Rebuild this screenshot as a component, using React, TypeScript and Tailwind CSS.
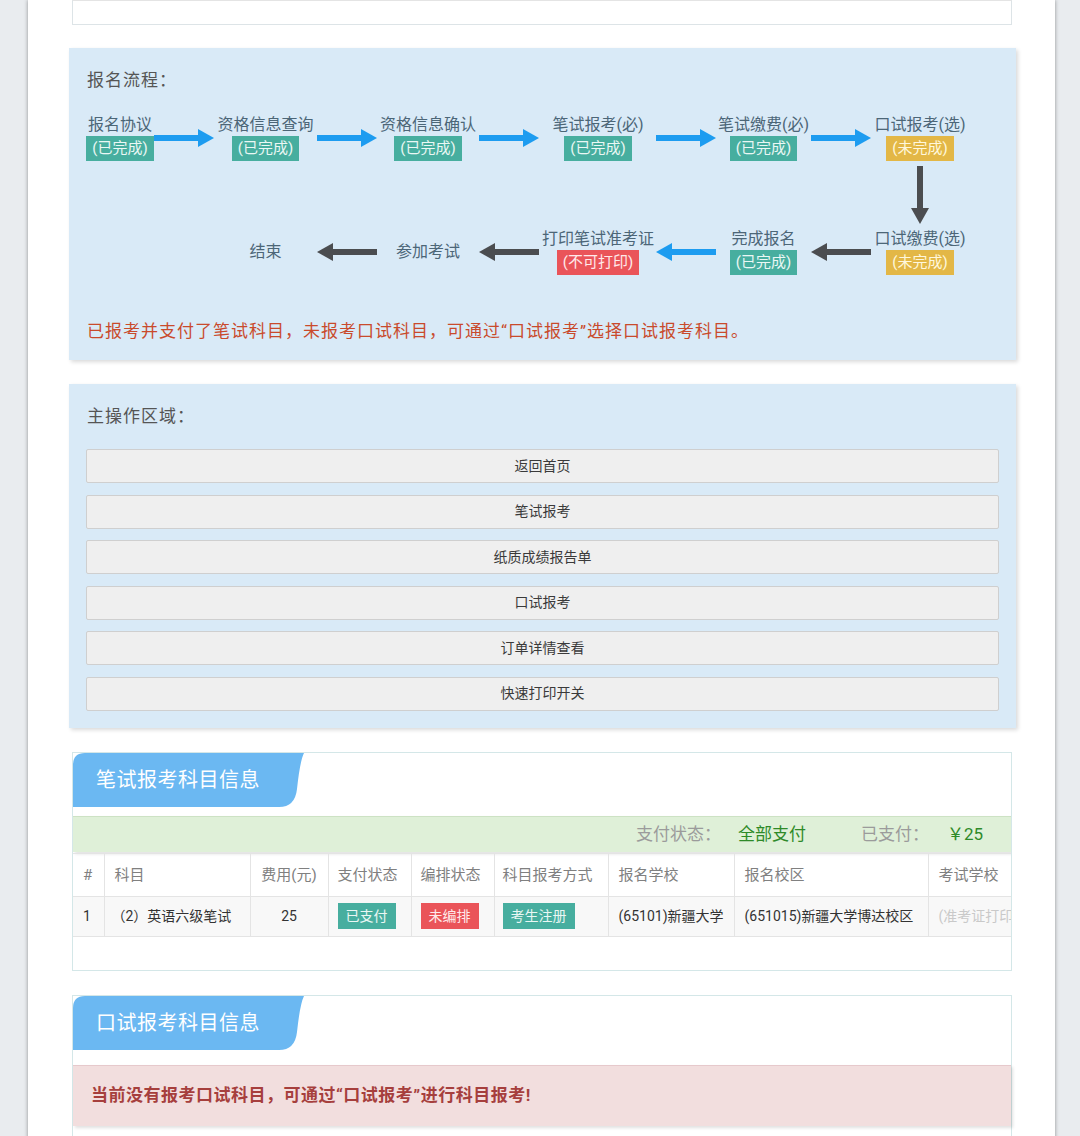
import React from "react";

type Step = { label: string; badge?: string; tone?: "done" | "todo" | "no" };

const BADGE_CLS: Record<string, string> = {
  done: "bg-[#47ae9f] text-[#eaf7f4]",
  todo: "bg-[#e3b746] text-[#fff7dc]",
  no: "bg-[#ea5459] text-[#ffe9ea]",
};

const BLUE = "#1d9cf0";
const DARK = "#4b4d50";

function ArrowRight({ color }: { color: string }) {
  return (
    <svg width="60" height="18" viewBox="0 0 60 18">
      <rect x="0" y="6" width="46" height="6" fill={color} />
      <polygon points="44,0 60,9 44,18" fill={color} />
    </svg>
  );
}

function ArrowLeft({ color }: { color: string }) {
  return (
    <svg width="60" height="18" viewBox="0 0 60 18">
      <rect x="14" y="6" width="46" height="6" fill={color} />
      <polygon points="16,0 0,9 16,18" fill={color} />
    </svg>
  );
}

function ArrowDown({ color }: { color: string }) {
  return (
    <svg width="18" height="58" viewBox="0 0 18 58">
      <rect x="6" y="0" width="6" height="44" fill={color} />
      <polygon points="0,42 18,42 9,58" fill={color} />
    </svg>
  );
}

function StepItem({ s }: { s: Step }) {
  return (
    <div className="flex flex-col items-center">
      <span className="text-[16px] leading-[22px] text-[#4c6677] whitespace-nowrap">{s.label}</span>
      {s.badge && (
        <span className={`h-[25px] leading-[25px] px-[6px] text-[15px] whitespace-nowrap ${BADGE_CLS[s.tone ?? "done"]}`}>
          {s.badge}
        </span>
      )}
    </div>
  );
}

const ROW1: Step[] = [
  { label: "报名协议", badge: "(已完成)", tone: "done" },
  { label: "资格信息查询", badge: "(已完成)", tone: "done" },
  { label: "资格信息确认", badge: "(已完成)", tone: "done" },
  { label: "笔试报考(必)", badge: "(已完成)", tone: "done" },
  { label: "笔试缴费(必)", badge: "(已完成)", tone: "done" },
  { label: "口试报考(选)", badge: "(未完成)", tone: "todo" },
];

const ACTIONS = ["返回首页", "笔试报考", "纸质成绩报告单", "口试报考", "订单详情查看", "快速打印开关"];

function Tab({ title }: { title: string }) {
  // blue tab with slanted right edge
  return (
    <div className="relative w-[232px] h-[54px] flex items-center">
      <svg className="absolute inset-0" width="232" height="54" viewBox="0 0 232 54">
        <path d="M0,12 Q0,0 12,0 L231,0 Q227,8 224,36 Q222,54 206,54 L0,54 Z" fill="#6bb8f2" />
      </svg>
      <span className="relative pl-[23px] text-[20px] text-white tracking-[0.5px]">{title}</span>
    </div>
  );
}

function Badge({ text, cls }: { text: string; cls: string }) {
  return (
    <span className={`inline-block h-[26px] leading-[26px] px-[8px] text-[14px] ${cls}`}>{text}</span>
  );
}

export default function App() {
  return (
    <div className="min-h-[1136px] bg-[#e9ecef] font-['Roboto','Noto_Sans_CJK_SC',sans-serif] overflow-hidden">
      <div className="ml-[28px] w-[1027px] min-h-[1180px] bg-white shadow-[0_0_4px_rgba(0,0,0,0.4)] pl-[41px] pr-[39px] pb-[40px]">
        {/* tail of previous card */}
        <div className="ml-[3px] w-[940px] h-[25px] border border-[#dde4e7] border-t-[#e4e4e4] bg-white" />

        {/* 报名流程 */}
        <div className="mt-[23px] bg-[#d9eaf7] shadow-[2px_2px_4px_rgba(0,0,0,0.15)] pt-[20px] pb-[17px] pl-[17px] pr-[17px]">
          <div className="pl-[1px] text-[17px] leading-[24px] text-[#555] tracking-[1px]">报名流程：</div>
          <div className="mt-[22px] grid grid-cols-[68px_60px_103px_60px_102px_60px_118px_58px_97px_58px_100px] items-center justify-items-center">
            {ROW1.map((s, i) => (
              <React.Fragment key={s.label}>
                <StepItem s={s} />
                {i < ROW1.length - 1 && <ArrowRight color={BLUE} />}
              </React.Fragment>
            ))}

            <div className="col-start-11 h-[67px] flex items-center">
              <ArrowDown color={DARK} />
            </div>

            <div />
            <div />
            <StepItem s={{ label: "结束" }} />
            <ArrowLeft color={DARK} />
            <StepItem s={{ label: "参加考试" }} />
            <ArrowLeft color={DARK} />
            <StepItem s={{ label: "打印笔试准考证", badge: "(不可打印)", tone: "no" }} />
            <ArrowLeft color={BLUE} />
            <StepItem s={{ label: "完成报名", badge: "(已完成)", tone: "done" }} />
            <ArrowLeft color={DARK} />
            <StepItem s={{ label: "口试缴费(选)", badge: "(未完成)", tone: "todo" }} />
          </div>
          <p className="mt-[44px] pl-[1px] text-[17px] leading-[24px] tracking-[1px] text-[#c94a2c]">
            已报考并支付了笔试科目，未报考口试科目，可通过“口试报考”选择口试报考科目。
          </p>
        </div>

        {/* 主操作区域 */}
        <div className="mt-[24px] bg-[#d9eaf7] shadow-[2px_2px_4px_rgba(0,0,0,0.15)] pt-[20px] pb-[17px] px-[17px]">
          <div className="pl-[1px] text-[17px] leading-[24px] text-[#555] tracking-[1px]">主操作区域：</div>
          <div className="mt-[21px] flex flex-col gap-[11.6px]">
            {ACTIONS.map(a => (
              <button
                key={a}
                className="h-[34px] w-full rounded-[2px] border border-[#cfcfcf] bg-[#efefef] text-[14px] text-[#3a3a3a]"
              >
                {a}
              </button>
            ))}
          </div>
        </div>

        {/* 笔试报考科目信息 */}
        <div className="mt-[24px] ml-[3px] w-[940px] h-[219px] border border-[#d4e7e8] bg-white overflow-hidden">
          <Tab title="笔试报考科目信息" />
          <div className="mt-[9px] flex items-center justify-end h-[36px] pr-[28px] bg-[#dff0d8] border-t border-[#cde2c4] shadow-[2px_2px_3px_rgba(0,0,0,0.12)] text-[17px]">
            <span className="text-[#9b9b9b]">支付状态：</span>
            <span className="ml-[17px] text-[#2e8a28]">全部支付</span>
            <span className="ml-[55px] text-[#9b9b9b]">已支付：</span>
            <span className="ml-[18px] text-[#2e8a28]">￥25</span>
          </div>
          <div className="mt-[1px] overflow-hidden">
            <table className="table-fixed w-[1010px] border-collapse text-left">
              <colgroup>
                <col className="w-[31px]" />
                <col className="w-[146px]" />
                <col className="w-[78px]" />
                <col className="w-[83px]" />
                <col className="w-[83px]" />
                <col className="w-[114px]" />
                <col className="w-[126px]" />
                <col className="w-[194px]" />
                <col className="w-[155px]" />
              </colgroup>
              <thead>
                <tr className="h-[43px] text-[15px] text-[#808080]">
                  <th className="font-normal border border-[#e4e4e4] border-l-0 pl-[10px]">#</th>
                  <th className="font-normal border border-[#e4e4e4] pl-[10px]">科目</th>
                  <th className="font-normal border border-[#e4e4e4] text-center">费用(元)</th>
                  <th className="font-normal border border-[#e4e4e4] pl-[9px]">支付状态</th>
                  <th className="font-normal border border-[#e4e4e4] pl-[9px]">编排状态</th>
                  <th className="font-normal border border-[#e4e4e4] pl-[8px]">科目报考方式</th>
                  <th className="font-normal border border-[#e4e4e4] pl-[10px]">报名学校</th>
                  <th className="font-normal border border-[#e4e4e4] pl-[10px]">报名校区</th>
                  <th className="font-normal border border-[#e4e4e4] pl-[10px] whitespace-nowrap">考试学校</th>
                </tr>
              </thead>
              <tbody>
                <tr className="h-[40px] bg-[#f8f8f8] text-[14px] text-[#333]">
                  <td className="border border-[#e4e4e4] border-l-0 pl-[10px]">1</td>
                  <td className="border border-[#e4e4e4] pl-[7px] whitespace-nowrap">（2）英语六级笔试</td>
                  <td className="border border-[#e4e4e4] text-center">25</td>
                  <td className="border border-[#e4e4e4] pl-[9px]">
                    <Badge text="已支付" cls="bg-[#47ae9f] text-[#eaf7f4]" />
                  </td>
                  <td className="border border-[#e4e4e4] pl-[9px]">
                    <Badge text="未编排" cls="bg-[#ea5459] text-[#ffe9ea]" />
                  </td>
                  <td className="border border-[#e4e4e4] pl-[8px]">
                    <Badge text="考生注册" cls="bg-[#47ae9f] text-[#eaf7f4]" />
                  </td>
                  <td className="border border-[#e4e4e4] pl-[10px] whitespace-nowrap">(65101)新疆大学</td>
                  <td className="border border-[#e4e4e4] pl-[10px] whitespace-nowrap">(651015)新疆大学博达校区</td>
                  <td className="border border-[#e4e4e4] pl-[10px] whitespace-nowrap text-[#c9c9c9] overflow-hidden">(准考证打印后显示)</td>
                </tr>
              </tbody>
            </table>
          </div>
        </div>

        {/* 口试报考科目信息 */}
        <div className="mt-[24px] ml-[3px] w-[940px] border border-[#d4e7e8] bg-white pb-[30px]">
          <Tab title="口试报考科目信息" />
          <div className="mt-[15px] h-[61px] flex items-center pl-[18px] bg-[#f2dede] border-t border-[#e6c9cc] shadow-[2px_2px_3px_rgba(0,0,0,0.12)]">
            <span className="text-[17px] font-bold tracking-[0.5px] text-[#a63f3d]">当前没有报考口试科目，可通过“口试报考”进行科目报考!</span>
          </div>
        </div>
      </div>
    </div>
  );
}
